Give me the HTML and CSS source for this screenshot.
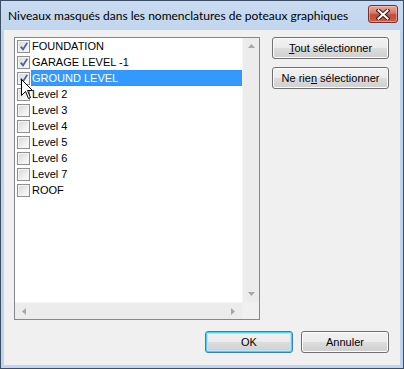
FILE: index.html
```html
<!DOCTYPE html>
<html>
<head>
<meta charset="utf-8">
<link rel="stylesheet" href="styles.css">
</head>
<body>
<div class="window">
  <div class="titlebar">
    <span class="title">Niveaux masqués dans les nomenclatures de poteaux graphiques</span>
    <div class="close">
      <svg width="14" height="11" viewBox="0 0 14 11">
        <path d="M2.5 1.5 L11.5 9.5 M11.5 1.5 L2.5 9.5" stroke="#3a1a16" stroke-width="4" stroke-linecap="square"/>
        <path d="M2.5 1.5 L11.5 9.5 M11.5 1.5 L2.5 9.5" stroke="#ffffff" stroke-width="2" stroke-linecap="square"/>
      </svg>
    </div>
  </div>
  <div class="client">
    <div class="top">
      <div class="listbox">
        <div class="listarea">
          <div class="items">
            <div class="item"><span class="cb checked"></span><span class="label">FOUNDATION</span></div>
            <div class="item"><span class="cb checked"></span><span class="label">GARAGE LEVEL -1</span></div>
            <div class="item"><span class="cb checked"></span><span class="label sel">GROUND LEVEL</span></div>
            <div class="item"><span class="cb"></span><span class="label">Level 2</span></div>
            <div class="item"><span class="cb"></span><span class="label">Level 3</span></div>
            <div class="item"><span class="cb"></span><span class="label">Level 4</span></div>
            <div class="item"><span class="cb"></span><span class="label">Level 5</span></div>
            <div class="item"><span class="cb"></span><span class="label">Level 6</span></div>
            <div class="item"><span class="cb"></span><span class="label">Level 7</span></div>
            <div class="item"><span class="cb"></span><span class="label">ROOF</span></div>
          </div>
          <div class="vscroll">
            <svg width="7" height="4" viewBox="0 0 7 4"><path d="M3.5 0 L7 4 L0 4 Z" fill="#a8a8a8"/></svg>
            <svg width="7" height="4" viewBox="0 0 7 4"><path d="M0 0 L7 0 L3.5 4 Z" fill="#a8a8a8"/></svg>
          </div>
        </div>
        <div class="bottomrow">
          <div class="hscroll">
            <svg width="4" height="7" viewBox="0 0 4 7"><path d="M4 0 L4 7 L0 3.5 Z" fill="#a8a8a8"/></svg>
            <svg width="4" height="7" viewBox="0 0 4 7"><path d="M0 0 L4 3.5 L0 7 Z" fill="#a8a8a8"/></svg>
          </div>
          <div class="corner"></div>
        </div>
      </div>
      <div class="sidebtns">
        <div class="btn wide"><span><u>T</u>out sélectionner</span></div>
        <div class="btn wide"><span>Ne rie<u>n</u> sélectionner</span></div>
      </div>
    </div>
    <div class="bottom">
      <div class="btn default"><span>OK</span></div>
      <div class="btn"><span>Annuler</span></div>
    </div>
  </div>
  <svg class="cursor" width="13" height="21" viewBox="0 0 13 21">
    <path d="M0.5 0.5 L0.5 16.5 L4.5 12.5 L7.5 19.5 L9.5 18.5 L6.5 11.5 L11.5 11.5 Z" fill="#ffffff" stroke="#000000" stroke-width="1" stroke-linejoin="miter"/>
  </svg>
</div>
</body>
</html>
```

FILE: styles.css
```css
html, body {
  margin: 0;
  padding: 0;
  background: #ffffff;
}

.window {
  position: relative;
  width: 404px;
  height: 369px;
  box-sizing: border-box;
  border: 1px solid #3b4e66;
  background: linear-gradient(#c9dbf0, #bed3ec 40px, #c0d5ed);
  display: flex;
  flex-direction: column;
  font-family: Lato, "Open Sans", sans-serif;
}

.titlebar {
  height: 29px;
  display: flex;
  align-items: flex-start;
  justify-content: space-between;
  padding: 0 5px 0 7px;
  box-sizing: border-box;
}

.title {
  font-size: 12px;
  line-height: 14px;
  margin-top: 8px;
  color: #000;
}

.close {
  margin-top: 4px;
  width: 30px;
  height: 18px;
  box-sizing: border-box;
  border: 1px solid #7b2e25;
  border-radius: 3px;
  background: linear-gradient(#e8a89c, #d4786a 45%, #c24a38 55%, #c9604e);
  display: flex;
  align-items: center;
  justify-content: center;
  box-shadow: inset 0 0 0 1px rgba(255, 220, 210, 0.45);
}

.client {
  flex: 1;
  margin: 0 3px 3px 3px;
  background: #f0f0f0;
  padding: 7px 11px 0 10px;
  display: flex;
  flex-direction: column;
}

.top {
  display: flex;
  gap: 12px;
}

.listbox {
  width: 246px;
  height: 283px;
  box-sizing: border-box;
  border: 1px solid #828790;
  background: #ffffff;
  display: flex;
  flex-direction: column;
}

.listarea {
  flex: 1;
  display: flex;
}

.items {
  flex: 1;
}

.item {
  height: 16px;
  display: flex;
  align-items: center;
  padding-left: 2px;
  font-family: "Liberation Sans", Arial, sans-serif;
  font-size: 11px;
  color: #000;
}

.cb {
  width: 13px;
  height: 13px;
  box-sizing: border-box;
  border: 1px solid #8e8f8f;
  background: linear-gradient(135deg, #d8d8d8, #f7f7f7 80%);
  box-shadow: inset 0 0 0 1px #f4f4f4;
  margin-right: 1px;
  flex: none;
  position: relative;
}

.cb.checked::after {
  content: "";
  position: absolute;
  left: 2px;
  top: 1px;
  width: 8px;
  height: 9px;
  background: url("data:image/svg+xml;utf8,<svg xmlns='http://www.w3.org/2000/svg' width='8' height='9' viewBox='0 0 8 9'><path d='M0.8 4.6 L3 7.4 L7.3 0.8' fill='none' stroke='%234a64a8' stroke-width='1.8'/></svg>") no-repeat;
}

.label {
  height: 16px;
  line-height: 16px;
  padding: 0 1px;
  box-sizing: border-box;
}

.label.sel {
  flex: 1;
  background: #3399ff;
  color: #ffffff;
  border: 1px dotted #cc6a1a;
  line-height: 14px;
  padding: 0;
}

.vscroll {
  width: 17px;
  background: #ececec;
  border-left: 1px solid #f6f6f6;
  box-sizing: border-box;
  display: flex;
  flex-direction: column;
  justify-content: space-between;
  align-items: center;
  padding: 6px 0 6px 1px;
}

.bottomrow {
  height: 17px;
  display: flex;
}

.hscroll {
  flex: 1;
  background: #ececec;
  border-top: 1px solid #f6f6f6;
  box-sizing: border-box;
  display: flex;
  justify-content: space-between;
  align-items: center;
  padding: 0 7px 0 7px;
}

.corner {
  width: 17px;
  background: #f0f0f0;
}

.sidebtns {
  display: flex;
  flex-direction: column;
  gap: 8px;
}

.btn {
  width: 88px;
  height: 22px;
  box-sizing: border-box;
  border: 1px solid #707070;
  border-radius: 3px;
  background: linear-gradient(#f2f2f2, #ebebeb 50%, #dddddd 50%, #cfcfcf);
  box-shadow: inset 0 0 0 1px #fcfcfc;
  display: flex;
  align-items: center;
  justify-content: center;
  font-family: "Liberation Sans", Arial, sans-serif;
  font-size: 11px;
  color: #000;
}

.btn.wide {
  width: 117px;
}

.btn.default {
  border-color: #3c7fb1;
  box-shadow: inset 0 0 0 1px #48d4f8, inset 0 0 0 2px #b6e6fa;
}

.btn u {
  text-underline-offset: 1px;
}

.bottom {
  display: flex;
  justify-content: flex-end;
  gap: 8px;
  margin-top: 11px;
}

.cursor {
  position: absolute;
  left: 20px;
  top: 78px;
}
```
